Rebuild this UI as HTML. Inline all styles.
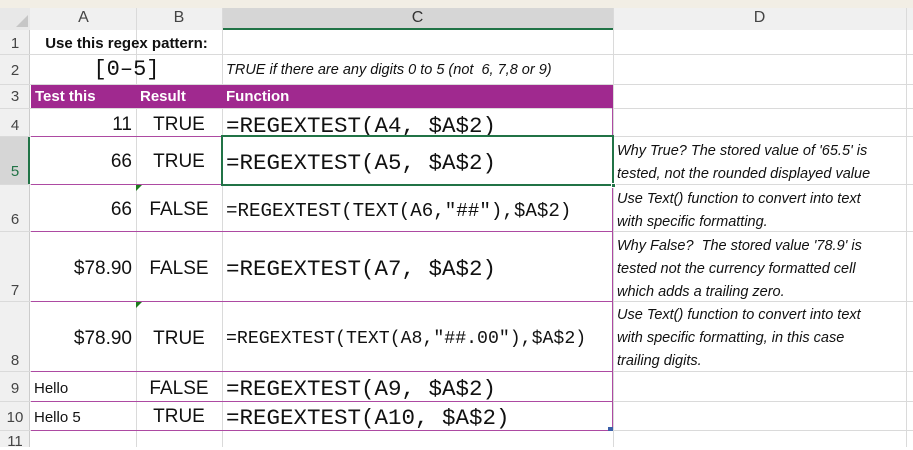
<!DOCTYPE html>
<html><head><meta charset="utf-8"><style>
*{margin:0;padding:0;box-sizing:border-box}
body{width:913px;height:447px;overflow:hidden;background:#fff;position:relative;font-family:"Liberation Sans",sans-serif;color:#111}
.a{position:absolute;white-space:nowrap}
.hl{position:absolute;background:#dadada}
.pl{position:absolute;background:#ad4aa2}
.mono{font-family:"Liberation Mono",monospace}
.rn{position:absolute;left:0;width:30px;text-align:center;font-size:15px;color:#444}
.it{font-style:italic;font-size:14.5px}
</style></head><body>
<div class="a" style="left:0;top:0;width:913px;height:8px;background:#f2eee5"></div>
<div class="a" style="left:0;top:8px;width:913px;height:22px;background:#f0f0f0"></div>
<div class="a" style="left:222px;top:8px;width:391px;height:22px;background:#d6d6d6;border-bottom:2px solid #217346"></div>
<div class="a" style="left:0;top:8px;width:30px;height:22px;background:#e8e8e8"></div>
<div class="a" style="left:16px;top:15px;width:0;height:0;border-left:12px solid transparent;border-bottom:12px solid #c6c6c6"></div>
<div class="a" style="left:31px;top:9px;width:105px;text-align:center;font-size:16px;color:#444">A</div>
<div class="a" style="left:136px;top:9px;width:86px;text-align:center;font-size:16px;color:#444">B</div>
<div class="a" style="left:222px;top:9px;width:391px;text-align:center;font-size:16px;color:#333">C</div>
<div class="a" style="left:613px;top:9px;width:293px;text-align:center;font-size:16px;color:#444">D</div>
<div class="a" style="left:0;top:30px;width:30px;height:417px;background:#f0f0f0;border-right:1px solid #ccc"></div>
<div class="a" style="left:0;top:136px;width:30px;height:48px;background:#d6d6d6;border-right:2px solid #217346"></div>
<div class="hl" style="left:136px;top:8px;width:1px;height:439px"></div>
<div class="hl" style="left:222px;top:8px;width:1px;height:439px"></div>
<div class="hl" style="left:613px;top:8px;width:1px;height:439px"></div>
<div class="hl" style="left:906px;top:8px;width:1px;height:439px"></div>
<div class="hl" style="left:0;top:54px;width:913px;height:1px"></div>
<div class="hl" style="left:0;top:84px;width:913px;height:1px"></div>
<div class="hl" style="left:0;top:108px;width:913px;height:1px"></div>
<div class="hl" style="left:0;top:136px;width:913px;height:1px"></div>
<div class="hl" style="left:0;top:184px;width:913px;height:1px"></div>
<div class="hl" style="left:0;top:231px;width:913px;height:1px"></div>
<div class="hl" style="left:0;top:301px;width:913px;height:1px"></div>
<div class="hl" style="left:0;top:371px;width:913px;height:1px"></div>
<div class="hl" style="left:0;top:401px;width:913px;height:1px"></div>
<div class="hl" style="left:0;top:430px;width:913px;height:1px"></div>
<div class="a" style="left:31px;top:85px;width:582px;height:23px;background:#a0298f"></div>
<div class="a" style="left:35px;top:88px;font-size:15px;font-weight:bold;color:#fff">Test this</div>
<div class="a" style="left:140px;top:88px;font-size:15px;font-weight:bold;color:#fff">Result</div>
<div class="a" style="left:226px;top:88px;font-size:15px;font-weight:bold;color:#fff">Function</div>
<div class="pl" style="left:31px;top:136px;width:582px;height:1px"></div>
<div class="pl" style="left:31px;top:184px;width:582px;height:1px"></div>
<div class="pl" style="left:31px;top:231px;width:582px;height:1px"></div>
<div class="pl" style="left:31px;top:301px;width:582px;height:1px"></div>
<div class="pl" style="left:31px;top:371px;width:582px;height:1px"></div>
<div class="pl" style="left:31px;top:401px;width:582px;height:1px"></div>
<div class="pl" style="left:31px;top:430px;width:582px;height:1px"></div>
<div class="pl" style="left:612px;top:108px;width:1px;height:323px"></div>
<div class="rn" style="top:35px">1</div>
<div class="rn" style="top:62px">2</div>
<div class="rn" style="top:88px">3</div>
<div class="rn" style="top:117px">4</div>
<div class="rn" style="top:163px;color:#217346">5</div>
<div class="rn" style="top:211px">6</div>
<div class="rn" style="top:282px">7</div>
<div class="rn" style="top:352px">8</div>
<div class="rn" style="top:380px">9</div>
<div class="rn" style="top:409px">10</div>
<div class="rn" style="top:433px">11</div>
<div class="a" style="left:31px;top:35px;width:191px;text-align:center;font-size:15px;font-weight:bold">Use this regex pattern:</div>
<div class="a mono" style="left:31px;top:57px;width:191px;text-align:center;font-size:22px">[0–5]</div>
<div class="a it" style="left:226px;top:62px">TRUE if there are any digits 0 to 5 (not &nbsp;6, 7,8 or 9)</div>
<div class="a" style="left:31px;top:114px;width:101px;text-align:right;font-size:19px">11</div>
<div class="a" style="left:136px;top:114px;width:86px;text-align:center;font-size:19px">TRUE</div>
<div class="a mono" style="left:226px;top:113px;font-size:22.5px">=REGEXTEST(A4, $A$2)</div>
<div class="a" style="left:31px;top:151px;width:101px;text-align:right;font-size:19px">66</div>
<div class="a" style="left:136px;top:151px;width:86px;text-align:center;font-size:19px">TRUE</div>
<div class="a mono" style="left:226px;top:150px;font-size:22.5px">=REGEXTEST(A5, $A$2)</div>
<div class="a" style="left:31px;top:199px;width:101px;text-align:right;font-size:19px">66</div>
<div class="a" style="left:136px;top:199px;width:86px;text-align:center;font-size:19px">FALSE</div>
<div class="a mono" style="left:226px;top:200px;font-size:19.2px">=REGEXTEST(TEXT(A6,"##"),$A$2)</div>
<div class="a" style="left:31px;top:258px;width:101px;text-align:right;font-size:19px">$78.90</div>
<div class="a" style="left:136px;top:258px;width:86px;text-align:center;font-size:19px">FALSE</div>
<div class="a mono" style="left:226px;top:256px;font-size:22.5px">=REGEXTEST(A7, $A$2)</div>
<div class="a" style="left:31px;top:328px;width:101px;text-align:right;font-size:19px">$78.90</div>
<div class="a" style="left:136px;top:328px;width:86px;text-align:center;font-size:19px">TRUE</div>
<div class="a mono" style="left:226px;top:329px;font-size:18.2px">=REGEXTEST(TEXT(A8,"##.00"),$A$2)</div>
<div class="a" style="left:34px;top:380px;font-size:15px">Hello</div>
<div class="a" style="left:136px;top:378px;width:86px;text-align:center;font-size:19px">FALSE</div>
<div class="a mono" style="left:226px;top:376px;font-size:22.5px">=REGEXTEST(A9, $A$2)</div>
<div class="a" style="left:34px;top:409px;font-size:15px">Hello 5</div>
<div class="a" style="left:136px;top:406px;width:86px;text-align:center;font-size:19px">TRUE</div>
<div class="a mono" style="left:226px;top:405px;font-size:22.5px">=REGEXTEST(A10, $A$2)</div>
<div class="a it" style="left:617px;top:140px;line-height:23px">Why True? The stored value of '65.5' is<br>tested, not the rounded displayed value</div>
<div class="a it" style="left:617px;top:188px;line-height:23px">Use Text() function to convert into text<br>with specific formatting.</div>
<div class="a it" style="left:617px;top:235px;line-height:23px">Why False? &nbsp;The stored value '78.9' is<br>tested not the currency formatted cell<br>which adds a trailing zero.</div>
<div class="a it" style="left:617px;top:304px;line-height:23px">Use Text() function to convert into text<br>with specific formatting, in this case<br>trailing digits.</div>
<div class="a" style="left:136px;top:185px;width:0;height:0;border-top:6px solid #1e7b1e;border-right:6px solid transparent"></div>
<div class="a" style="left:136px;top:302px;width:0;height:0;border-top:6px solid #1e7b1e;border-right:6px solid transparent"></div>
<div class="a" style="left:221px;top:135px;width:393px;height:51px;border:2px solid #217346"></div>
<div class="a" style="left:611px;top:183px;width:5px;height:5px;background:#217346;border:1px solid #fff"></div>
<div class="a" style="left:608px;top:427px;width:5px;height:4px;background:#3a5fa8"></div>
</body></html>
